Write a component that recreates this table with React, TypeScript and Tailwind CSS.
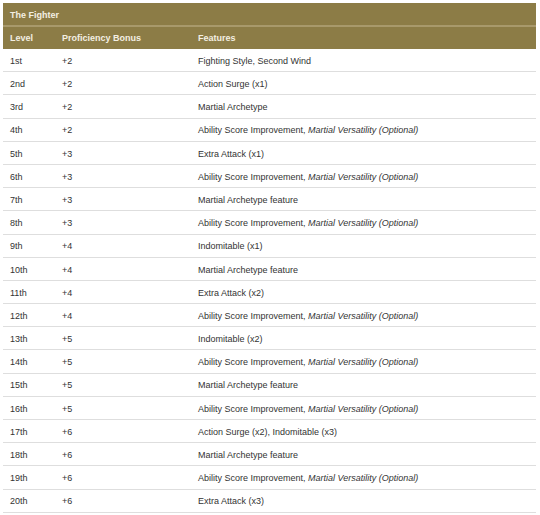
import React from "react";

const rows: [string, string, string][] = [
  ["1st", "+2", "Fighting Style, Second Wind"],
  ["2nd", "+2", "Action Surge (x1)"],
  ["3rd", "+2", "Martial Archetype"],
  ["4th", "+2", "ASI"],
  ["5th", "+3", "Extra Attack (x1)"],
  ["6th", "+3", "ASI"],
  ["7th", "+3", "Martial Archetype feature"],
  ["8th", "+3", "ASI"],
  ["9th", "+4", "Indomitable (x1)"],
  ["10th", "+4", "Martial Archetype feature"],
  ["11th", "+4", "Extra Attack (x2)"],
  ["12th", "+4", "ASI"],
  ["13th", "+5", "Indomitable (x2)"],
  ["14th", "+5", "ASI"],
  ["15th", "+5", "Martial Archetype feature"],
  ["16th", "+5", "ASI"],
  ["17th", "+6", "Action Surge (x2), Indomitable (x3)"],
  ["18th", "+6", "Martial Archetype feature"],
  ["19th", "+6", "ASI"],
  ["20th", "+6", "Extra Attack (x3)"],
];

function Feature({ v }: { v: string }) {
  if (v === "ASI")
    return (
      <>
        Ability Score Improvement, <i>Martial Versatility (Optional)</i>
      </>
    );
  return <>{v}</>;
}

export default function App() {
  return (
    <div className="w-[540px] h-[515px] bg-white pt-[3px] px-[3px] overflow-hidden font-['Liberation_Sans',Arial,sans-serif]">
      <div className="w-[533px]">
        <div className="bg-[#8c7c46] text-[#f3efe2] font-bold text-[9px]">
          <div className="h-[22px] flex items-center pl-[7px] pt-[3px]">The Fighter</div>
          <div className="h-[2px] bg-[#a8996b]" />
          <div className="h-[22px] flex items-center pt-[2px]">
            <div className="w-[52px] pl-[7px]">Level</div>
            <div className="w-[136px] pl-[7px]">Proficiency Bonus</div>
            <div className="pl-[7px]">Features</div>
          </div>
        </div>
        {rows.map(([l, p, f]) => (
          <div
            key={l}
            className="h-[23.2px] flex items-center pt-[3px] text-[9px] text-[#333333] border-b border-[#dedede]"
          >
            <div className="w-[52px] pl-[7px]">{l}</div>
            <div className="w-[136px] pl-[7px]">{p}</div>
            <div className="pl-[7px]">
              <Feature v={f} />
            </div>
          </div>
        ))}
      </div>
    </div>
  );
}
